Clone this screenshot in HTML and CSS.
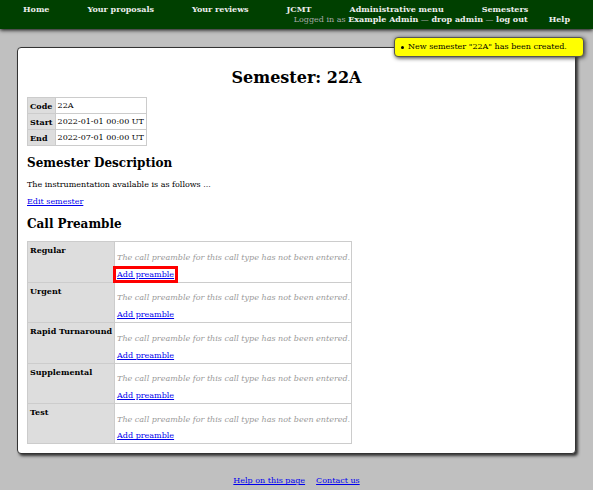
FILE: index.html
```html
<!DOCTYPE html>
<html>
<head>
<meta charset="utf-8">
<title>Semester: 22A</title>
<link rel="stylesheet" href="styles.css">
</head>
<body>
<div class="header">
  <div class="nav-row">
    <a class="nav-link" href="#">Home</a>
    <a class="nav-link" href="#">Your proposals</a>
    <a class="nav-link" href="#">Your reviews</a>
    <a class="nav-link" href="#">JCMT</a>
    <a class="nav-link" href="#">Administrative menu</a>
    <a class="nav-link" href="#">Semesters</a>
  </div>
  <div class="nav-row nav-row-right">
    <span class="login">Logged in as <a class="nav-link" href="#">Example Admin</a> — <a class="nav-link" href="#">drop admin</a> — <a class="nav-link" href="#">log out</a></span>
    <a class="nav-link" href="#">Help</a>
  </div>
</div>

<div class="message">
  <ul class="message-list"><li class="message-item">New semester "22A" has been created.</li></ul>
</div>

<div class="main">
  <h1 class="title">Semester: 22A</h1>
  <table class="info">
    <tr><th>Code</th><td>22A</td></tr>
    <tr><th>Start</th><td>2022-01-01 00:00 UT</td></tr>
    <tr><th>End</th><td>2022-07-01 00:00 UT</td></tr>
  </table>
  <h2 class="section">Semester Description</h2>
  <p class="para">The instrumentation available is as follows ...</p>
  <p class="para"><a href="#">Edit semester</a></p>
  <h2 class="section section-gap">Call Preamble</h2>
  <table class="preamble">
    <tr><th>Regular</th><td><p class="missing">The call preamble for this call type has not been entered.</p><p class="action"><a class="highlight" href="#">Add preamble</a></p></td></tr>
    <tr><th>Urgent</th><td><p class="missing">The call preamble for this call type has not been entered.</p><p class="action"><a href="#">Add preamble</a></p></td></tr>
    <tr><th>Rapid Turnaround</th><td><p class="missing">The call preamble for this call type has not been entered.</p><p class="action"><a href="#">Add preamble</a></p></td></tr>
    <tr><th>Supplemental</th><td><p class="missing">The call preamble for this call type has not been entered.</p><p class="action"><a href="#">Add preamble</a></p></td></tr>
    <tr><th>Test</th><td><p class="missing">The call preamble for this call type has not been entered.</p><p class="action"><a href="#">Add preamble</a></p></td></tr>
  </table>
</div>

<div class="footer">
  <a href="#">Help on this page</a>
  <a href="#">Contact us</a>
</div>
</body>
</html>
```

FILE: styles.css
```css
html, body {
  margin: 0;
  padding: 0;
}
body {
  background: #c0c0c0;
  font-family: "DejaVu Serif", serif;
  font-size: 8px;
  color: #000;
  position: relative;
}
a {
  color: #0000ee;
}
.header {
  background: #004000;
  height: 29px;
  padding: 4px 23px 0 23px;
  box-sizing: border-box;
  box-shadow: 0 1px 4px #000;
  line-height: 10px;
}
.nav-row {
  display: flex;
  gap: 38px;
}
.nav-row-right {
  justify-content: flex-end;
  gap: 21px;
}
.nav-link {
  color: #eeeeee;
  font-weight: bold;
  text-decoration: none;
}
.login {
  color: #aaaaaa;
}
.message {
  position: absolute;
  top: 37px;
  right: 9px;
  width: 188px;
  height: 18px;
  background: #ffff00;
  border: 1px solid #555;
  border-radius: 4px;
  box-shadow: 1px 1px 4px #333;
}
.message-list {
  margin: 0;
  padding: 0 0 0 13px;
  line-height: 18px;
  list-style: none;
}
.message-item {
  position: relative;
}
.message-item::before {
  content: "";
  position: absolute;
  left: -7px;
  top: 8px;
  width: 3px;
  height: 3px;
  border-radius: 50%;
  background: #000;
}
.main {
  margin: 18px 17px 0 17px;
  background: #fff;
  border: 1px solid #333;
  border-radius: 4px;
  box-shadow: 2px 2px 3px #333;
  padding: 9px;
}
.title {
  font-size: 16px;
  text-align: center;
  margin: 10.7px 0;
}
.section {
  font-size: 12px;
  margin: 10px 0;
}
.section-gap {
  margin-top: 11px;
}
.para {
  margin: 8px 0;
}
table {
  border-collapse: collapse;
  font-size: 8px;
}
th, td {
  border: 1px solid #ccc;
  text-align: left;
  vertical-align: top;
}
th {
  background: #dddddd;
}
.info th, .info td {
  padding: 3px 2px 2px 2px;
}
.preamble th {
  padding: 3px 2px;
  white-space: nowrap;
}
.preamble td {
  padding: 3px 1px 3px 2px;
}
.missing {
  margin: 7.7px 0;
  color: #999;
  font-style: italic;
}
.action {
  margin: 0;
}
.highlight {
  outline: 3px solid #ff0000;
  outline-offset: 1px;
}
.footer {
  text-align: center;
  margin-top: 22px;
  display: flex;
  justify-content: center;
  gap: 11px;
}
```
